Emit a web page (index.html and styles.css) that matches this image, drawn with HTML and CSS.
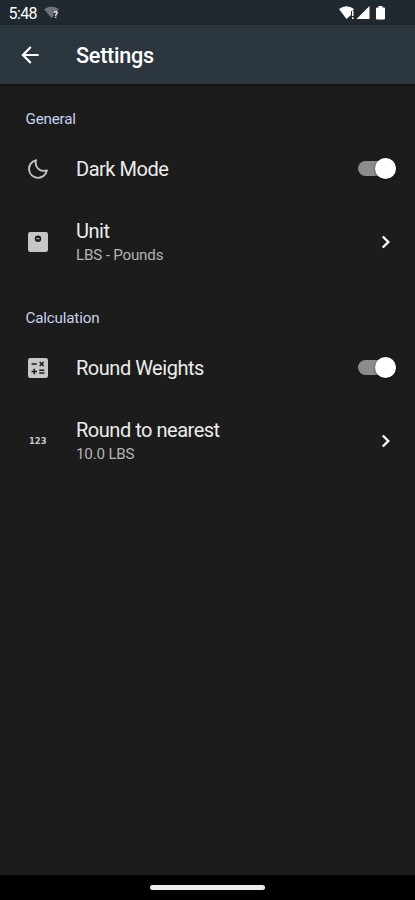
FILE: index.html
```html
<!DOCTYPE html>
<html lang="en">
<head>
<meta charset="utf-8">
<title>Settings</title>
<link rel="stylesheet" href="styles.css">
</head>
<body>
<div class="status">
  <span class="clock">5:48</span>
  <svg class="wifi-off" width="17" height="14" viewBox="0 0 17 14"><path d="M0 3.2Q7.5-2.2 15 3.2L13 5.5H9.5V10L7.5 12Z" fill="#6c7276"/><text x="9.500" y="12" class="question">?</text></svg>
  <svg class="signals" width="50" height="16" viewBox="0 0 50 16">
    <path d="M0 4Q7.500-1.300 15 4L13.500 6H12V10L7.500 14Z" fill="#fff"/>
    <path d="M13 6h1.500v5H13zM13 12.300h1.500v1.700H13zM17.500 14L30.500 1V14Z" fill="#fff"/>
    <path d="M39.500 1h4v1.500h1.500q1 0 1 1v10q0 1-1 1h-7q-1 0-1-1v-10q0-1 1-1h1.500z" fill="#fff"/>
  </svg>
</div>
<header class="appbar">
  <svg class="back" width="26" height="26" viewBox="0 0 24 24"><path d="M20 11H7.830l5.590-5.590L12 4l-8 8 8 8 1.410-1.410L7.830 13H20z" fill="#fff"/></svg>
  <h1 class="title">Settings</h1>
</header>
<main class="content">
  <section>
    <h2 class="heading">General</h2>
    <div class="row">
      <div class="icon"><svg width="20" height="20" viewBox="0 0 20 20"><path d="M8 1.100A9 9 0 1 0 18.900 11.400C11.500 13.500 6.300 8 8 1.100Z" fill="none" stroke="#c6c6c6" stroke-width="1.900" stroke-linejoin="round"/></svg></div>
      <div class="label">Dark Mode</div>
      <div class="switch"><span class="thumb"></span></div>
    </div>
    <div class="row tall">
      <div class="icon"><svg width="20" height="20" viewBox="0 0 20 20"><rect width="20" height="20" rx="2.200" fill="#c6c6c6"/><circle cx="10" cy="6.700" r="3.200" fill="#1c1c1c"/><path d="M8.300 6.700h3.400" stroke="#c6c6c6" stroke-width="1"/></svg></div>
      <div class="label">Unit<div class="sub">LBS - Pounds</div></div>
      <svg class="chevron" width="26" height="26" viewBox="0 0 24 24"><path d="M9 6.900l5.100 5.100L9 17.100" fill="none" stroke="#fff" stroke-width="2.200"/></svg>
    </div>
  </section>
  <section>
    <h2 class="heading">Calculation</h2>
    <div class="row">
      <div class="icon"><svg width="20" height="20" viewBox="0 0 20 20"><rect width="20" height="20" rx="2.200" fill="#c6c6c6"/><path d="M3.600 6h5.200M3.600 13.500h5.400M6.300 10.800v5.400M11.200 12.200h5.200M11.200 15h5.200M11.700 4l4 4M15.700 4l-4 4" fill="none" stroke="#1c1c1c" stroke-width="1.600"/></svg></div>
      <div class="label">Round Weights</div>
      <div class="switch"><span class="thumb"></span></div>
    </div>
    <div class="row tall">
      <div class="icon"><svg width="20" height="10" viewBox="0 0 20 10"><text x="1" y="8.300" class="digits" textLength="17.500" lengthAdjust="spacingAndGlyphs">123</text></svg></div>
      <div class="label">Round to nearest<div class="sub">10.0 LBS</div></div>
      <svg class="chevron" width="26" height="26" viewBox="0 0 24 24"><path d="M9 6.900l5.100 5.100L9 17.100" fill="none" stroke="#fff" stroke-width="2.200"/></svg>
    </div>
  </section>
</main>
<footer class="navbar"><span class="handle"></span></footer>
</body>
</html>
```
FILE: styles.css
```css
* { box-sizing: border-box; }
body {
  margin: 0;
  height: 900px;
  display: flex;
  flex-direction: column;
  overflow: hidden;
  background: #1c1c1c;
  color: #ececec;
  font-family: Roboto, sans-serif;
}
.status {
  height: 25px;
  display: flex;
  align-items: center;
  padding: 0 28px 0 8.5px;
  background: #20292f;
}
.clock { width: 28.5px; font-size: 16px; letter-spacing: -.6px; line-height: 25px; color: #fff; white-space: nowrap; padding-top: 2px; }
.wifi-off { margin-left: 7px; }
.question { font: 700 9px Roboto, sans-serif; fill: #fff; }
.signals { margin-left: auto; margin-right: -2px; }
.appbar {
  height: 59px;
  display: flex;
  align-items: center;
  padding-left: 17px;
  background: #2c363f;
  box-shadow: 0 1px 3px rgba(0, 0, 0, .5);
}
.title { margin: 2px 0 0 33px; font-size: 21.6px; letter-spacing: -.25px; font-weight: 500; line-height: 28px; color: #fff; }
.content { flex: 1; }
.heading {
  height: 54px;
  margin: 0;
  padding: 25px 25px 0 25.5px;
  font-size: 15.2px;
  letter-spacing: -.18px;
  font-weight: 400;
  line-height: 20px;
  color: #c8d2f0;
}
.row { height: 62px; display: flex; align-items: center; padding: 0 19px 0 25px; }
.row.tall { height: 83px; }
.icon { width: 26px; height: 26px; display: flex; align-items: center; justify-content: center; }
.label { flex: 1; margin-left: 25px; font-size: 20px; letter-spacing: -.48px; line-height: 25px; }
.sub { font-size: 15.2px; letter-spacing: -.2px; line-height: 20px; color: #b3b3b3; padding-top: 1px; }
.switch {
  width: 38px;
  height: 15px;
  display: flex;
  align-items: center;
  justify-content: flex-end;
  margin-bottom: 1px;
  border-radius: 8px;
  background: #8c8c8c;
}
.thumb { width: 21px; height: 21px; flex: none; border-radius: 50%; background: #fff; box-shadow: 0 1px 3px rgba(0, 0, 0, .5); }
.chevron { margin-right: -3px; }
.digits { font: 700 8.5px "DejaVu Sans", sans-serif; fill: #c6c6c6; }
.navbar { height: 25px; display: flex; align-items: center; justify-content: center; background: #000; }
.handle { width: 115px; height: 5px; border-radius: 3px; background: #ededed; }
```
